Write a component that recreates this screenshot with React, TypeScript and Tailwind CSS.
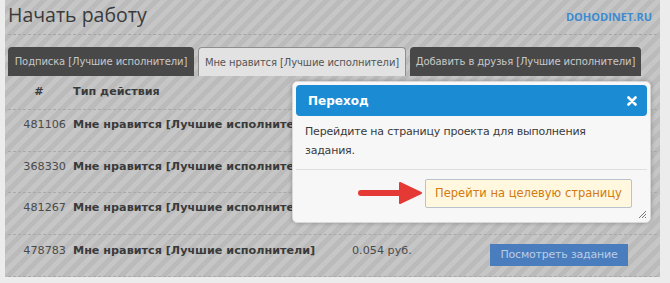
import React from "react";

const font = { fontFamily: '"DejaVu Sans", Verdana, sans-serif' };

const rows = [
  { id: "481106", name: "Мне нравится [Лучшие исполнители]" },
  { id: "368330", name: "Мне нравится [Лучшие исполнители]" },
  { id: "481267", name: "Мне нравится [Лучшие исполнители]" },
];

export default function App() {
  return (
    <div className="w-[670px] h-[283px] bg-[#ececec] pl-[5px] pr-[10px] pb-[6px] overflow-hidden" style={font}>
      <div className="relative h-full bg-[repeating-linear-gradient(135deg,#c6c6c6_0px,#c6c6c6_5px,#bbbbbb_5px,#bbbbbb_10px)] px-[3px]">
        {/* Title */}
        <div className="flex items-end justify-between h-[35px] border-b border-dashed border-[#a5a5a5]">
          <div className="text-[19.5px] leading-[26px] text-[#3a3a3a] pb-[6px]" style={{ fontFamily: '"Open Sans", sans-serif' }}>
            Начать работу
          </div>
          <div className="text-[11px] font-bold text-[#3a8bd2] pb-[9px] pr-[5px]" style={{ fontFamily: '"Open Sans", sans-serif' }}>
            DOHODINET.RU
          </div>
        </div>
        {/* Tabs */}
        <div className="flex items-end gap-[4px] mt-[12px] h-[29px] text-[10px] tracking-[-0.1px] whitespace-nowrap">
          <div className="shrink-0 h-full w-[186px] bg-[#484848] rounded-t-[4px] flex items-center justify-center text-[#c8c8c8]">
            Подписка [Лучшие исполнители]
          </div>
          <div className="shrink-0 h-full w-[208px] bg-[#e2e2e2] border border-[#8e8e8e] border-b-0 rounded-t-[4px] flex items-center justify-center text-[#555555]">
            Мне нравится [Лучшие исполнители]
          </div>
          <div className="shrink-0 h-full w-[231px] bg-[#484848] rounded-t-[4px] flex items-center justify-center text-[#c8c8c8]">
            Добавить в друзья [Лучшие исполнители]
          </div>
        </div>
        {/* Table */}
        <div className="text-[11.2px] text-[#3a3a3a]">
          <div className="flex items-center h-[34px] border-b border-dashed border-[#a9a9a9] font-bold">
            <div className="w-[50px] text-center pl-[12px]">#</div>
            <div className="pl-[15px]">Тип действия</div>
          </div>
          {rows.map((r) => (
            <div key={r.id} className="flex items-start pt-[8px] leading-[14px] h-[41.7px] border-b border-dashed border-[#a9a9a9]">
              <div className="w-[58px] text-right text-[#4a4a4a]">{r.id}</div>
              <div className="pl-[7px] font-bold">{r.name}</div>
            </div>
          ))}
          <div className="flex items-start pt-[9px] leading-[14px] h-[41.7px] border-b border-dashed border-[#a9a9a9]">
            <div className="w-[58px] text-right text-[#4a4a4a]">478783</div>
            <div className="pl-[7px] font-bold w-[286px]">Мне нравится [Лучшие исполнители]</div>
            <div className="text-[#4a4a4a] w-[138px]">0.054 руб.</div>
            <div className="w-[138px] h-[22px] bg-[#4a7dbd] flex items-center justify-center text-[#b9cde6] text-[11px] tracking-[-0.2px]">
              Посмотреть задание
            </div>
          </div>
        </div>

        {/* Modal */}
        <div className="absolute left-[287px] top-[81px] w-[359px] h-[142px] bg-[#f7f7f7] border border-[#d8d8d8] rounded-[5px] p-[3px] shadow-[0_0_4px_rgba(0,0,0,0.25)]">
          <div className="h-[31px] bg-[#1b8cd3] rounded-[4px] flex items-center justify-between pl-[12px] pr-[10px] text-white text-[12px] font-bold">
            <span>Переход</span>
            <svg width="10" height="10" viewBox="0 0 10 10">
              <path d="M1.5 1.5 L8.5 8.5 M8.5 1.5 L1.5 8.5" stroke="#ffffff" strokeWidth="2.6" strokeLinecap="round" />
            </svg>
          </div>
          <div className="px-[9px] pt-[6px] h-[54px] text-[11px] tracking-[-0.2px] leading-[19px] text-[#3a3a3a] border-b border-[#dedede]">
            Перейдите на страницу проекта для выполнения задания.
          </div>
          <div className="relative flex justify-end pr-[15px] pt-[9px]">
            <svg className="absolute left-[62px] top-[11px]" width="66" height="24" viewBox="0 0 66 24">
              <path d="M3 12 L46 12" stroke="#e53935" strokeWidth="6" strokeLinecap="round" />
              <path d="M42 2 L63 12 L42 22 Z" fill="#e53935" stroke="#e53935" strokeWidth="2" strokeLinejoin="round" />
            </svg>
            <div className="w-[207px] h-[29px] bg-[#fff8df] border border-[#b9c3cc] rounded-[2px] flex items-center justify-center text-[#d3790f] text-[11.5px]">
              Перейти на целевую страницу
            </div>
          </div>
          <svg className="absolute right-[3px] bottom-[3px]" width="10" height="10" viewBox="0 0 10 10">
            <path d="M9 2 L2 9 M9 5 L5 9 M9 8 L8 9" stroke="#777" strokeWidth="1" />
          </svg>
        </div>
      </div>
    </div>
  );
}
